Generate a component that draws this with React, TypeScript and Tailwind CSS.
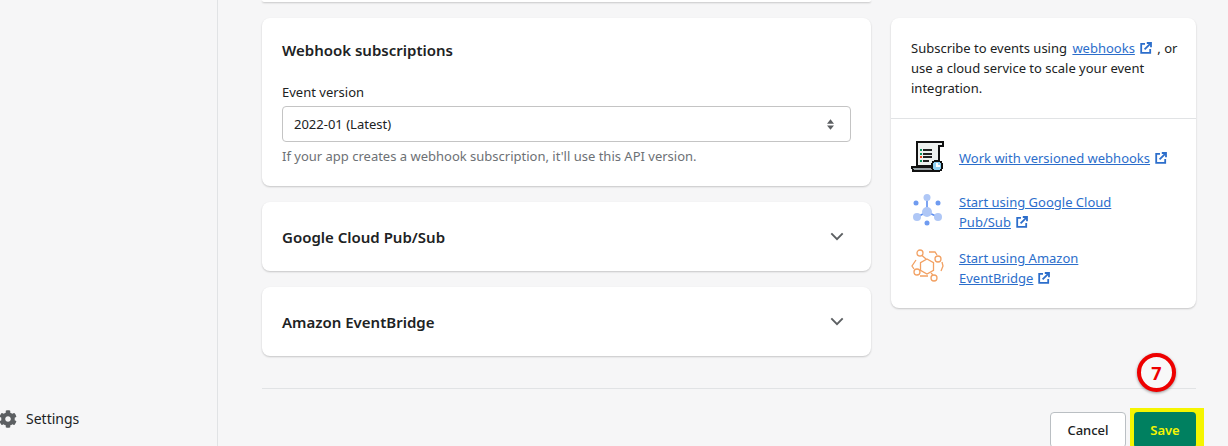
import { FaCog } from "react-icons/fa";

function ExternalIcon() {
  return (
    <svg viewBox="0 0 12 12" className="inline-block w-3 h-3 ml-[5px] align-[-1px]" fill="none" stroke="#2c6ecb" strokeWidth="1.8">
      <path d="M5 1.8H1.2v9h9V7" />
      <path d="M4.6 7.4 10.4 1.6M6.8 1h4.2v4.2" />
    </svg>
  );
}

function Chevron() {
  return (
    <svg viewBox="0 0 16 10" className="w-[14px] h-[9px]" fill="none" stroke="#5c5f62" strokeWidth="2.2">
      <path d="M1.5 1.5 8 8l6.5-6.5" />
    </svg>
  );
}

function ScrollIcon() {
  return (
    <svg viewBox="0 2 34 34" className="w-[34px] h-[34px] overflow-visible" shapeRendering="crispEdges">
      <path d="M6 3h26v4h-4v20H6z" fill="#eef1ef" stroke="#111" strokeWidth="2" />
      <path d="M1 28h23v4H2z" fill="#9aa3a6" stroke="#111" strokeWidth="2" />
      <path d="M9 10h2v2H9zM9 14h2v2H9zM9 21h2v2H9z" fill="#0a8f5b" />
      <path d="M9 17h2v2H9z" fill="#e8401c" />
      <path d="M12 10h9v2h-9zM12 14h9v2h-9zM12 17h9v2h-9zM12 21h6v2h-6z" fill="#222" />
      <circle cx="26" cy="27" r="5.5" fill="#8fd0f2" stroke="#111" strokeWidth="2" />
      <path d="M26 24v3h3" fill="none" stroke="#fff" strokeWidth="1.4" />
    </svg>
  );
}

function PubSubIcon() {
  return (
    <svg viewBox="0 0 34 34" className="w-[34px] h-[34px] overflow-visible">
      <path d="M16 5v12M16 17 6 22M16 17l11 5" stroke="#5b8def" strokeWidth="1.6" />
      <circle cx="16" cy="2.5" r="3.5" fill="#afc7f6" />
      <circle cx="16" cy="17" r="5" fill="#afc7f6" />
      <circle cx="6" cy="22" r="4" fill="#afc7f6" />
      <circle cx="27" cy="22" r="4" fill="#afc7f6" />
      <circle cx="5" cy="8" r="2.5" fill="#6f9bf0" />
      <circle cx="27" cy="8" r="2.5" fill="#6f9bf0" />
      <circle cx="16" cy="28" r="2.5" fill="#6f9bf0" />
    </svg>
  );
}

function EventBridgeIcon() {
  return (
    <svg viewBox="0 0 34 34" className="w-[34px] h-[34px] overflow-visible" fill="none" stroke="#f2a163" strokeWidth="1.3">
      <path d="M16 8l6.5 3.7v7.6L16 23l-6.5-3.7v-7.6z" />
      <circle cx="9" cy="2" r="3" />
      <circle cx="27" cy="8" r="3" />
      <circle cx="6" cy="21" r="3" />
      <circle cx="23" cy="27" r="3" />
      <path d="M11 4.5 15 8M18 1h6l2 3M31 11l1 4-2 5M5 9l-4 6 2 3M9 25h8M20 22l2 2" />
    </svg>
  );
}

function Collapsed({ title }: { title: string }) {
  return (
    <div className="flex h-[69px] items-center justify-between rounded-lg bg-white pl-5 pr-[27px] shadow-[0_1px_2px_rgba(0,0,0,0.2)]">
      <h2 className="pt-px text-[15px] font-semibold text-[#202223]">{title}</h2>
      <Chevron />
    </div>
  );
}

export default function App() {
  return (
    <div
      className="flex h-[446px] overflow-hidden bg-[#f6f6f7] text-[13px] text-[#202223]"
      style={{ fontFamily: '"Noto Sans", sans-serif' }}
    >
      {/* Sidebar */}
      <div className="flex w-[218px] shrink-0 flex-col justify-end border-r border-[#e1e3e5] pb-[17px]">
        <div className="flex h-5 items-center gap-[9px] text-sm">
          <FaCog className="-ml-px h-[18px] w-[18px] text-[#5c5f62]" />
          <span>Settings</span>
        </div>
      </div>

      {/* Main */}
      <div className="flex-1 pl-11 pr-8">
        <div className="flex gap-5">
          <div className="flex w-[609px] flex-col gap-4">
            <div className="h-[2px] rounded-b-lg bg-white shadow-[0_1px_2px_rgba(0,0,0,0.2)]" />
            <div className="rounded-lg bg-white p-5 shadow-[0_1px_2px_rgba(0,0,0,0.2)]">
              <h2 className="text-[15px] font-semibold leading-6">Webhook subscriptions</h2>
              <div className="mt-5 leading-5">Event version</div>
              <div className="mt-1 flex h-9 items-center justify-between rounded border border-[#c4c4c4] pl-[11px] pr-4">
                <span className="pt-px">2022-01 (Latest)</span>
                <svg viewBox="0 0 8 12" className="h-[11px] w-[7px]" fill="#5c5f62">
                  <path d="M4 0l4 5H0zM4 12 0 7h8z" />
                </svg>
              </div>
              <div className="mt-1 leading-5 text-[#6d7175]">
                If your app creates a webhook subscription, it'll use this API version.
              </div>
            </div>
            <Collapsed title="Google Cloud Pub/Sub" />
            <Collapsed title="Amazon EventBridge" />
          </div>

          <div className="mt-[18px] h-[290px] w-[305px] rounded-lg bg-white shadow-[0_1px_2px_rgba(0,0,0,0.2)]">
            <div className="border-b border-[#e1e3e5] py-5 pl-5 pr-3 leading-5">
              Subscribe to events using{" "}
              <a className="ml-[2px] text-[#2c6ecb] underline">webhooks</a>
              <ExternalIcon /> <span className="ml-[2px]">, or</span>
              <br />
              use a cloud service to scale your event
              <br />
              integration.
            </div>
            <div className="flex flex-col gap-4 px-5 pt-[21px] leading-5 text-[#2c6ecb]">
              <div className="flex h-9 items-center gap-[14px]">
                <ScrollIcon />
                <div>
                  <a className="underline">Work with versioned webhooks</a>
                  <ExternalIcon />
                </div>
              </div>
              <div className="flex items-center gap-[14px]">
                <PubSubIcon />
                <div className="w-[180px]">
                  <a className="underline">Start using Google Cloud Pub/Sub</a>
                  <ExternalIcon />
                </div>
              </div>
              <div className="flex items-center gap-[14px]">
                <EventBridgeIcon />
                <div className="w-[180px]">
                  <a className="underline">Start using Amazon EventBridge</a>
                  <ExternalIcon />
                </div>
              </div>
            </div>
          </div>
        </div>

        <div className="mt-8 border-t border-[#e1e3e5] pt-[23px]">
          <div className="flex justify-end gap-2">
            <button className="h-9 w-[76px] rounded border border-[#babfc3] bg-white pt-px font-medium">Cancel</button>
            <div className="relative">
              <div className="absolute -bottom-1 -left-1 -right-2 -top-1 bg-[#f5f500]" />
              <button className="relative h-9 w-[62px] rounded bg-[#008060] pt-px font-semibold text-[#f5f500]">Save</button>
            </div>
          </div>
        </div>
      </div>

      {/* Step marker */}
      <div className="absolute left-[1137px] top-[353px] flex h-[39px] w-[39px] items-center justify-center rounded-full border-[4.5px] border-[#ee0000] bg-[#f8f8f8] text-lg font-bold text-[#ee0000] shadow-[0_1px_3px_rgba(0,0,0,0.4)]">
        7
      </div>
    </div>
  );
}
